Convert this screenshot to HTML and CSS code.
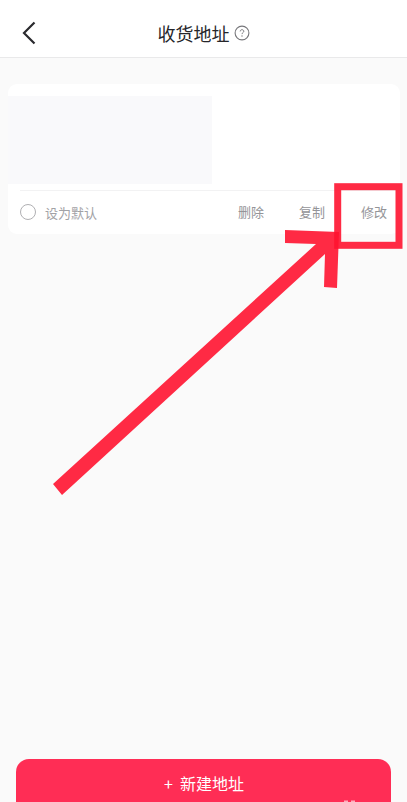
FILE: index.html
```html
<!DOCTYPE html>
<html lang="zh-CN">
<head>
<meta charset="utf-8">
<title>收货地址</title>
<link rel="stylesheet" href="styles.css">
</head>
<body>
<div class="page">
  <header class="header">
    <svg class="back" viewBox="0 0 14 24" width="14" height="24"><path d="M12.5 1.5 2 12l10.5 10.5" fill="none" stroke="#2a2a2e" stroke-width="2.2"/></svg>
    <h1 class="title">收货地址</h1>
    <svg class="help" viewBox="0 0 16 16" width="16" height="16"><circle cx="8" cy="8" r="6.9" fill="none" stroke="#77777b" stroke-width="1.1"/><path d="M6.2 6.4c0-1 .8-1.7 1.8-1.7s1.8.7 1.8 1.6c0 1.3-1.8 1.4-1.8 2.8" fill="none" stroke="#77777b" stroke-width="1"/><circle cx="8" cy="11" r=".65" fill="#77777b"/></svg>
  </header>
  <main class="content">
    <section class="card">
      <div class="placeholder"></div>
      <div class="actions">
        <span class="radio"></span>
        <span class="default-label">设为默认</span>
        <span class="action action-delete">删除</span>
        <span class="action action-copy">复制</span>
        <span class="action action-edit">修改</span>
      </div>
    </section>
  </main>
  <footer class="footer">
    <button class="new-btn"><span class="plus">+</span>新建地址</button>
  </footer>
  <svg class="annotation" viewBox="0 0 407 802" width="407" height="802">
    <polygon class="arrow" points="53,484 62,495 325,254 324,287 337,288 339,232 285,230 285,243 316,244"/>
    <rect class="mark" x="337.7" y="186.7" width="61.3" height="58.6"/>
    <rect class="speck" x="344" y="800.5" width="4" height="1.5"/>
    <rect class="speck" x="351" y="800.5" width="4" height="1.5"/>
  </svg>
</div>
</body>
</html>
```
FILE: styles.css
```css
* { box-sizing: border-box; }
html, body { margin: 0; padding: 0; }
body { font-family: "Noto Sans CJK SC", "Noto Sans", sans-serif; background: #fafafa; }
.page { position: relative; width: 407px; height: 802px; overflow: hidden; display: flex; flex-direction: column; background: #fafafa; }
.header { height: 58px; flex: none; background: #fff; border-bottom: 1px solid #e9e9ea; display: flex; align-items: center; justify-content: center; position: relative; padding-top: 9px; }
.back { position: absolute; left: 22px; top: 21px; }
.title { margin: 0; font-size: 18px; font-weight: 400; line-height: 24px; color: #26262a; }
.help { margin-left: 4px; }
.content { flex: 1; padding: 26px 7px 0 8px; }
.card { background: #fff; border-radius: 9px; height: 150px; padding-top: 12px; display: flex; flex-direction: column; }
.placeholder { width: 204px; height: 88px; background: #f9f9fb; }
.actions { margin: 6px 0 0 12px; border-top: 1px solid #f2f2f3; padding-bottom: 1px; flex: 1; display: flex; align-items: center; font-size: 13px; color: #949498; }
.radio { width: 16px; height: 16px; border: 1.3px solid #b0b0b3; border-radius: 50%; }
.default-label { margin-left: 9px; font-size: 13px; color: #a2a2a6; }
.action { line-height: 18px; }
.action-delete { margin-left: auto; }
.action-copy { margin-left: 35px; }
.action-edit { margin-left: 36px; margin-right: 13px; }
.footer { flex: none; height: 43px; padding: 0 16px; }
.new-btn { display: block; width: 375px; height: 60px; border: 0; border-radius: 13px; background: #ff2d55; color: #fff; font: inherit; font-size: 16px; line-height: 22px; padding: 0 0 12px 1px; text-align: center; }
.plus { margin-right: 7px; }
.annotation { position: absolute; left: 0; top: 0; pointer-events: none; }
.arrow { fill: #ff1330; opacity: .9; }
.mark { fill: none; stroke: #ff1330; stroke-width: 7; opacity: .9; }
.speck { fill: #fff; opacity: .6; }
```
